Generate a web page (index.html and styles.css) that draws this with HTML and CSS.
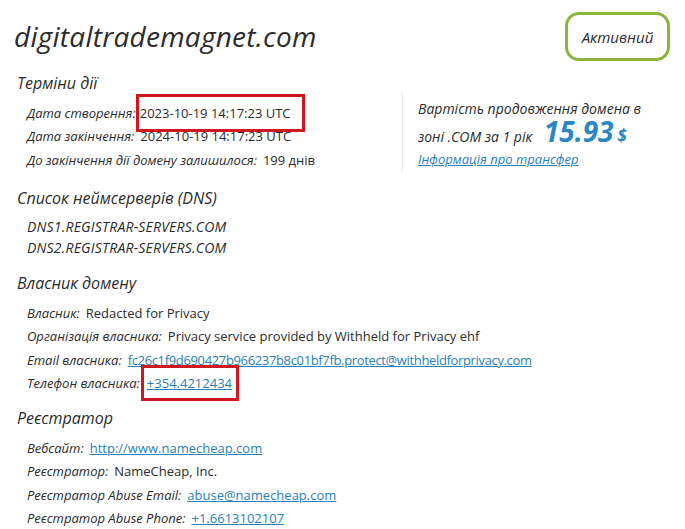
FILE: index.html
```html
<!DOCTYPE html>
<html lang="uk">
<head>
<meta charset="utf-8">
<title>digitaltrademagnet.com</title>
<link rel="stylesheet" href="styles.css">
</head>
<body>
<main class="whois">
  <header class="whois-head">
    <h1 class="domain">digitaltrademagnet.com</h1>
    <span class="status">Активний</span>
  </header>

  <section class="block block-terms">
    <h2 class="block-title">Терміни дії</h2>
    <div class="terms">
      <div class="rows">
        <div class="row"><span class="label">Дата створення:</span><span class="value marked">2023-10-19 14:17:23 UTC</span></div>
        <div class="row"><span class="label">Дата закінчення:</span><span class="value">2024-10-19 14:17:23 UTC</span></div>
        <div class="row"><span class="label">До закінчення дії домену залишилося:</span><span class="value">199 днів</span></div>
      </div>
      <aside class="price">
        <p class="price-line">Вартість продовження домена в</p>
        <p class="price-line price-total">зоні .COM за 1 рік <span class="amount">15.93</span> <span class="currency">$</span></p>
        <a class="price-link" href="#">Інформація про трансфер</a>
      </aside>
    </div>
  </section>

  <section class="block block-dns">
    <h2 class="block-title">Список неймсерверів (DNS)</h2>
    <div class="dns">
      <div class="dns-item">DNS1.REGISTRAR-SERVERS.COM</div>
      <div class="dns-item">DNS2.REGISTRAR-SERVERS.COM</div>
    </div>
  </section>

  <section class="block">
    <h2 class="block-title">Власник домену</h2>
    <div class="rows">
      <div class="row"><span class="label">Власник:</span><span class="value">Redacted for Privacy</span></div>
      <div class="row"><span class="label">Організація власника:</span><span class="value">Privacy service provided by Withheld for Privacy ehf</span></div>
      <div class="row"><span class="label">Email власника:</span><a class="value link tight" href="#">fc26c1f9d690427b966237b8c01bf7fb.protect@withheldforprivacy.com</a></div>
      <div class="row"><span class="label">Телефон власника:</span><span class="value marked marked-sm"><a class="link" href="#">+354.4212434</a></span></div>
    </div>
  </section>

  <section class="block block-registrar">
    <h2 class="block-title">Реєстратор</h2>
    <div class="rows">
      <div class="row"><span class="label">Вебсайт:</span><a class="value link" href="#">http://www.namecheap.com</a></div>
      <div class="row"><span class="label">Реєстратор:</span><span class="value">NameCheap, Inc.</span></div>
      <div class="row"><span class="label">Реєстратор Abuse Email:</span><a class="value link" href="#">abuse@namecheap.com</a></div>
      <div class="row"><span class="label">Реєстратор Abuse Phone:</span><a class="value link" href="#">+1.6613102107</a></div>
    </div>
  </section>
</main>
</body>
</html>
```

FILE: styles.css
```css
* { box-sizing: border-box; }

html, body {
  margin: 0;
  background: #ffffff;
}

body {
  font-family: "Open Sans", "Noto Sans", sans-serif;
  color: #2b2b2b;
  overflow: hidden;
}

.whois {
  width: 685px;
  padding: 0 15px 0 14px;
}

/* domain name + status pill */
.whois-head {
  display: flex;
  justify-content: space-between;
  align-items: flex-start;
  padding-top: 12px;
}

.domain {
  margin: 5px 0 0;
  font-size: 28px;
  font-weight: 500;
  font-style: italic;
  letter-spacing: 0.25px;
  color: #2b2b2b;
}

.status {
  display: flex;
  align-items: center;
  justify-content: center;
  width: 105px;
  height: 49px;
  border: 3px solid #8db53d;
  border-radius: 14px;
  font-size: 15px;
  font-weight: 500;
  font-style: italic;
}

/* sections */
.block { margin-top: 10px; }
.block-terms { margin-top: 11px; }
.block-dns { margin-top: 14px; }
.block-registrar { margin-top: 12px; }

.block-title {
  margin: 0;
  padding-left: 3px;
  font-size: 16px;
  font-weight: 500;
  font-style: italic;
  line-height: 22px;
}

.terms {
  display: flex;
  align-items: flex-start;
}

.rows {
  padding: 7px 0 0 13px;
}

.terms .rows { flex: 0 0 388px; }

.row {
  display: flex;
  align-items: center;
  height: 23.5px;
  font-size: 13px;
}

.label {
  font-style: italic;
  margin-right: 6px;
}

.value { color: #2b2b2b; }

.link,
.value.link {
  color: #2a7fb8;
  text-decoration: underline;
}

.tight { letter-spacing: -0.35px; }

/* red highlight frames */
.marked {
  outline: 3px solid #d0161e;
  padding: 7px 11px 7px 1px;
  margin-left: -3px;
}

.marked-sm {
  padding: 6px 4px 6px 3px;
  margin-left: -2px;
}

/* renewal price panel */
.price {
  margin-top: -2px;
  padding: 4px 0 4px 15px;
  border-left: 1px solid #ececec;
}

.price-line {
  margin: 0;
  font-size: 14px;
  font-weight: 500;
  font-style: italic;
  line-height: 25px;
}

.amount {
  display: inline-block;
  font-size: 28px;
  font-weight: 700;
  color: #2a86c4;
  line-height: 20px;
  margin-left: 8px;
}

.currency {
  font-size: 17px;
  font-weight: 700;
  color: #2a86c4;
}

.price-link {
  display: block;
  font-size: 13px;
  font-style: italic;
  color: #2a7fb8;
  line-height: 20px;
}

/* name servers */
.dns {
  padding: 7px 0 4px 13px;
}

.dns-item {
  font-size: 14px;
  font-style: italic;
  letter-spacing: 0.2px;
  line-height: 21px;
}
```
